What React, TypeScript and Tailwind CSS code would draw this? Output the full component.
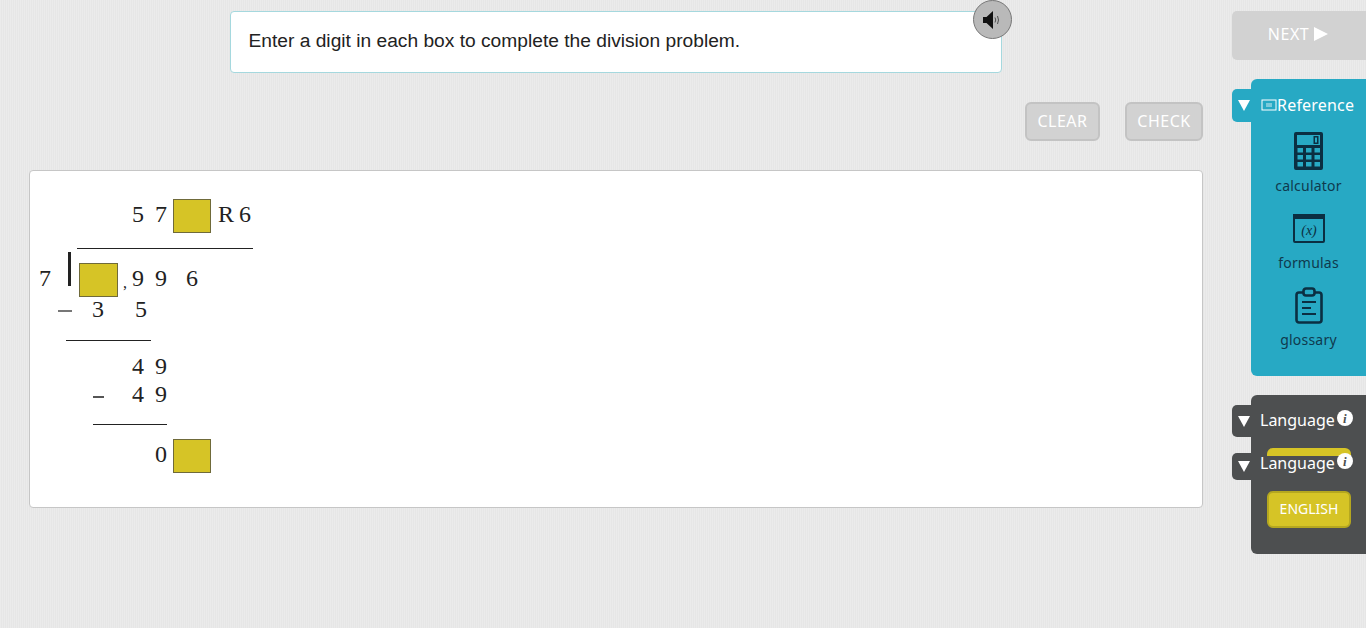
import React from "react";

const ui = "font-['Noto_Sans',sans-serif]";

function Box({ w = "w-[38px]" }: { w?: string }) {
  return <div className={`${w} h-[34px] shrink-0 border border-[#6f6a3a] bg-[#d6c426]`} />;
}

// one digit of the long division, offset from whatever came before it
function D({ ml, children, lift = "-mt-[4px]" }: { ml: string; children: React.ReactNode; lift?: string }) {
  return <span className={`${ml} ${lift} w-[12px] shrink-0 text-center`}>{children}</span>;
}

function Division() {
  return (
    <div className="flex flex-col pl-[10px] pt-[28px] font-['Liberation_Serif',serif] text-[24px] leading-[28px] text-[#222]">
      <div className="flex h-[34px] items-center">
        <D ml="ml-[92px]">5</D>
        <D ml="ml-[11px]">7</D>
        <div className="ml-[6px]"><Box /></div>
        <span className="-mt-[4px] ml-[7px]">R</span>
        <D ml="ml-[5px]">6</D>
      </div>
      <div className="ml-[37px] mt-[15px] h-px w-[176px] bg-[#222]" />
      <div className="mt-[14px] flex h-[34px] items-center">
        <D ml="-ml-[1px]">7</D>
        <div className="ml-[17px] -mt-[22px] h-[34px] w-[3px] bg-[#222]" />
        <div className="ml-[8px]"><Box w="w-[39px]" /></div>
        <span className="ml-[5px] mt-[6px] text-[16px]">,</span>
        <D ml="ml-[5px]">9</D>
        <D ml="ml-[11px]">9</D>
        <D ml="ml-[19px]">6</D>
      </div>
      <div className="flex h-[26px] items-center">
        <span className="ml-[18px] mt-[2px] h-[2px] w-[14px] bg-[#777]" />
        <D ml="ml-[20px]" lift="-mt-[2px]">3</D>
        <D ml="ml-[31px]" lift="-mt-[2px]">5</D>
      </div>
      <div className="ml-[26px] mt-[17px] h-px w-[85px] bg-[#222]" />
      <div className="mt-[13px] flex h-[28px] items-center">
        <D ml="ml-[92px]">4</D>
        <D ml="ml-[11px]">9</D>
      </div>
      <div className="flex h-[28px] items-center">
        <span className="ml-[53px] mt-[2px] h-[2px] w-[11px] bg-[#555]" />
        <D ml="ml-[28px]">4</D>
        <D ml="ml-[11px]">9</D>
      </div>
      <div className="ml-[53px] mt-[14px] h-px w-[74px] bg-[#222]" />
      <div className="mt-[14px] flex h-[34px] items-center">
        <D ml="ml-[115px]">0</D>
        <div className="ml-[6px]"><Box /></div>
      </div>
    </div>
  );
}

function CalculatorIcon() {
  return (
    <svg width="29" height="38" viewBox="0 0 29 38" fill="#0b2f42">
      <path fillRule="evenodd" d="M2 0h25a2 2 0 0 1 2 2v34a2 2 0 0 1-2 2H2a2 2 0 0 1-2-2V2a2 2 0 0 1 2-2zM3 3v10h23V3z" />
      <rect x="19.500" y="4" width="5" height="8" fill="#0b2f42" />
      <rect x="21" y="5.500" width="2" height="5" fill="#27a9c4" />
      {[16, 23, 30].map((y) =>
        [3.500, 12, 20.500].map((x) => <rect key={`${x}-${y}`} x={x} y={y} width="5.500" height="4.500" fill="#27a9c4" />)
      )}
    </svg>
  );
}

function FormulaIcon() {
  return (
    <svg width="32" height="29" viewBox="0 0 32 29">
      <rect x="1" y="1" width="30" height="27" rx="1" fill="none" stroke="#0b2f42" strokeWidth="2" />
      <rect x="0" y="0" width="32" height="5" fill="#0b2f42" />
      <text x="16" y="21" textAnchor="middle" fontFamily="Liberation Serif, serif" fontStyle="italic" fontSize="14" fill="#0b2f42">(x)</text>
    </svg>
  );
}

function ClipboardIcon() {
  return (
    <svg width="28" height="37" viewBox="0 0 28 37" fill="none" stroke="#0b2f42" strokeWidth="2.600">
      <rect x="1.500" y="5.500" width="25" height="30" rx="2.500" />
      <rect x="8.500" y="1.500" width="11" height="7" rx="2.500" fill="#27a9c4" />
      <path d="M7 15h14M7 21h9M7 27h14" strokeWidth="2" />
    </svg>
  );
}

function SpeakerIcon() {
  return (
    <svg width="20" height="18" viewBox="0 0 20 18" fill="none">
      <path d="M0 6h3.500L10 0v18l-6.500-6H0z" fill="#111" />
      <path d="M12 6.500q1.500 2.500 0 5M14.500 5q2 4 0 8" stroke="#333" strokeWidth="0.800" />
    </svg>
  );
}

function Info() {
  return (
    <span className="ml-[2px] -mt-[4px] flex h-[16px] w-[16px] items-center justify-center rounded-full bg-white font-['Liberation_Serif',serif] text-[13px] font-bold italic leading-none text-[#4d4f50]">
      i
    </span>
  );
}

function Arrow() {
  return (
    <svg width="12" height="11" viewBox="0 0 12 11" fill="#fff">
      <path d="M0 0h12L6 11z" />
    </svg>
  );
}

function Tab({ className }: { className: string }) {
  return (
    <div className={`absolute left-[-19px] flex w-[20px] items-center justify-center rounded-l-[5px] pl-[4px] ${className}`}>
      <Arrow />
    </div>
  );
}

function Tool({ icon, label, iconClass = "" }: { icon: React.ReactNode; label: string; iconClass?: string }) {
  return (
    <div className="flex flex-col items-center">
      <div className={`flex h-[38px] items-end ${iconClass}`}>{icon}</div>
      <span className="mt-[6px] text-[14px] leading-[20px] tracking-[0.2px] text-[#0f3a4e]">{label}</span>
    </div>
  );
}

function GreyButton({ className, children }: { className: string; children: React.ReactNode }) {
  return (
    <button className={`h-[39px] rounded-[6px] border-2 border-[#c3c3c3] bg-[#d2d2d2] pb-[2px] text-[16px] tracking-[0.5px] text-white ${className}`}>
      {children}
    </button>
  );
}

export default function App() {
  return (
    <div className={`flex h-[628px] w-[1366px] overflow-hidden bg-[#e9e9e9] bg-[repeating-linear-gradient(90deg,#ebebeb_0px,#ebebeb_1px,#e6e6e6_1px,#e6e6e6_2px)] ${ui}`}>
      <main className="ml-[29px] flex w-[1174px] flex-col">
        <div className="relative ml-[201px] mt-[11px] flex h-[62px] w-[772px] items-center rounded-[4px] border border-[#a5d8de] bg-white pb-[2px] pl-[17.500px] font-['Liberation_Sans',sans-serif] text-[19.200px] text-[#222]">
          Enter a digit in each box to complete the division problem.
          <div className="absolute right-[-11px] top-[-12px] flex h-[39px] w-[39px] items-center justify-center rounded-full border border-[#777] bg-[#b9b9b9]">
            <SpeakerIcon />
          </div>
        </div>
        <div className="mt-[29px] flex justify-end gap-[25px]">
          <GreyButton className="w-[75px]">CLEAR</GreyButton>
          <GreyButton className="w-[78px]">CHECK</GreyButton>
        </div>
        <div className="mt-[29px] h-[338px] rounded-[4px] border border-[#c6c6c6] bg-white">
          <Division />
        </div>
      </main>

      <aside className="ml-[29px] flex w-[134px] flex-col">
        <div className="mt-[11px] flex h-[49px] items-center justify-center gap-[5px] rounded-l-[5px] bg-[#d2d2d2] pb-[3px] pr-[2px] text-[16px] tracking-[0.5px] text-white">
          NEXT
          <svg width="14" height="14" viewBox="0 0 14 14" fill="#fff">
            <path d="M0 0l14 7-14 7z" />
          </svg>
        </div>

        <section className="relative ml-[19px] mt-[19px] h-[297px] rounded-l-[6px] bg-[#27a9c4]">
          <Tab className="top-[10px] h-[33px] bg-[#27a9c4]" />
          <div className="flex h-[53px] items-center pb-[1px] pl-[10px] text-[16px] tracking-[0.2px] text-white">
            <svg width="16" height="12" viewBox="0 0 16 12" fill="none" stroke="#fff">
              <rect x="1" y="1" width="14" height="10" />
              <path d="M6 4v4M8 4v4M10 4v4" strokeWidth="0.800" />
            </svg>
            <span>Reference</span>
          </div>
          <div className="flex flex-col gap-[13px]">
            <Tool icon={<CalculatorIcon />} label="calculator" />
            <Tool icon={<FormulaIcon />} label="formulas" iconClass="pb-[4px]" />
            <Tool icon={<ClipboardIcon />} label="glossary" />
          </div>
        </section>

        <section className="relative ml-[19px] mt-[19px] h-[159px] rounded-l-[6px] bg-[#4d4f50] text-white">
          <Tab className="top-[10px] h-[32px] bg-[#4d4f50]" />
          <div className="flex h-[50px] items-center pl-[9px] text-[16px]">
            Language
            <Info />
          </div>
          <Tab className="top-[58px] h-[27px] bg-[#4d4f50]" />
          <div className="absolute left-[16px] top-[53px] h-[8px] w-[84px] rounded-t-[6px] bg-[#d6c426]" />
          <div className="relative z-10 mt-[4px] flex h-[28px] items-center pl-[9px] text-[16px]">
            Language
            <Info />
          </div>
          <button className="ml-[16px] mt-[14px] h-[37px] w-[84px] rounded-[6px] border-2 border-[#b5a71f] bg-[#d6c426] pb-[2px] text-[14px] text-white">
            ENGLISH
          </button>
        </section>
      </aside>
    </div>
  );
}
